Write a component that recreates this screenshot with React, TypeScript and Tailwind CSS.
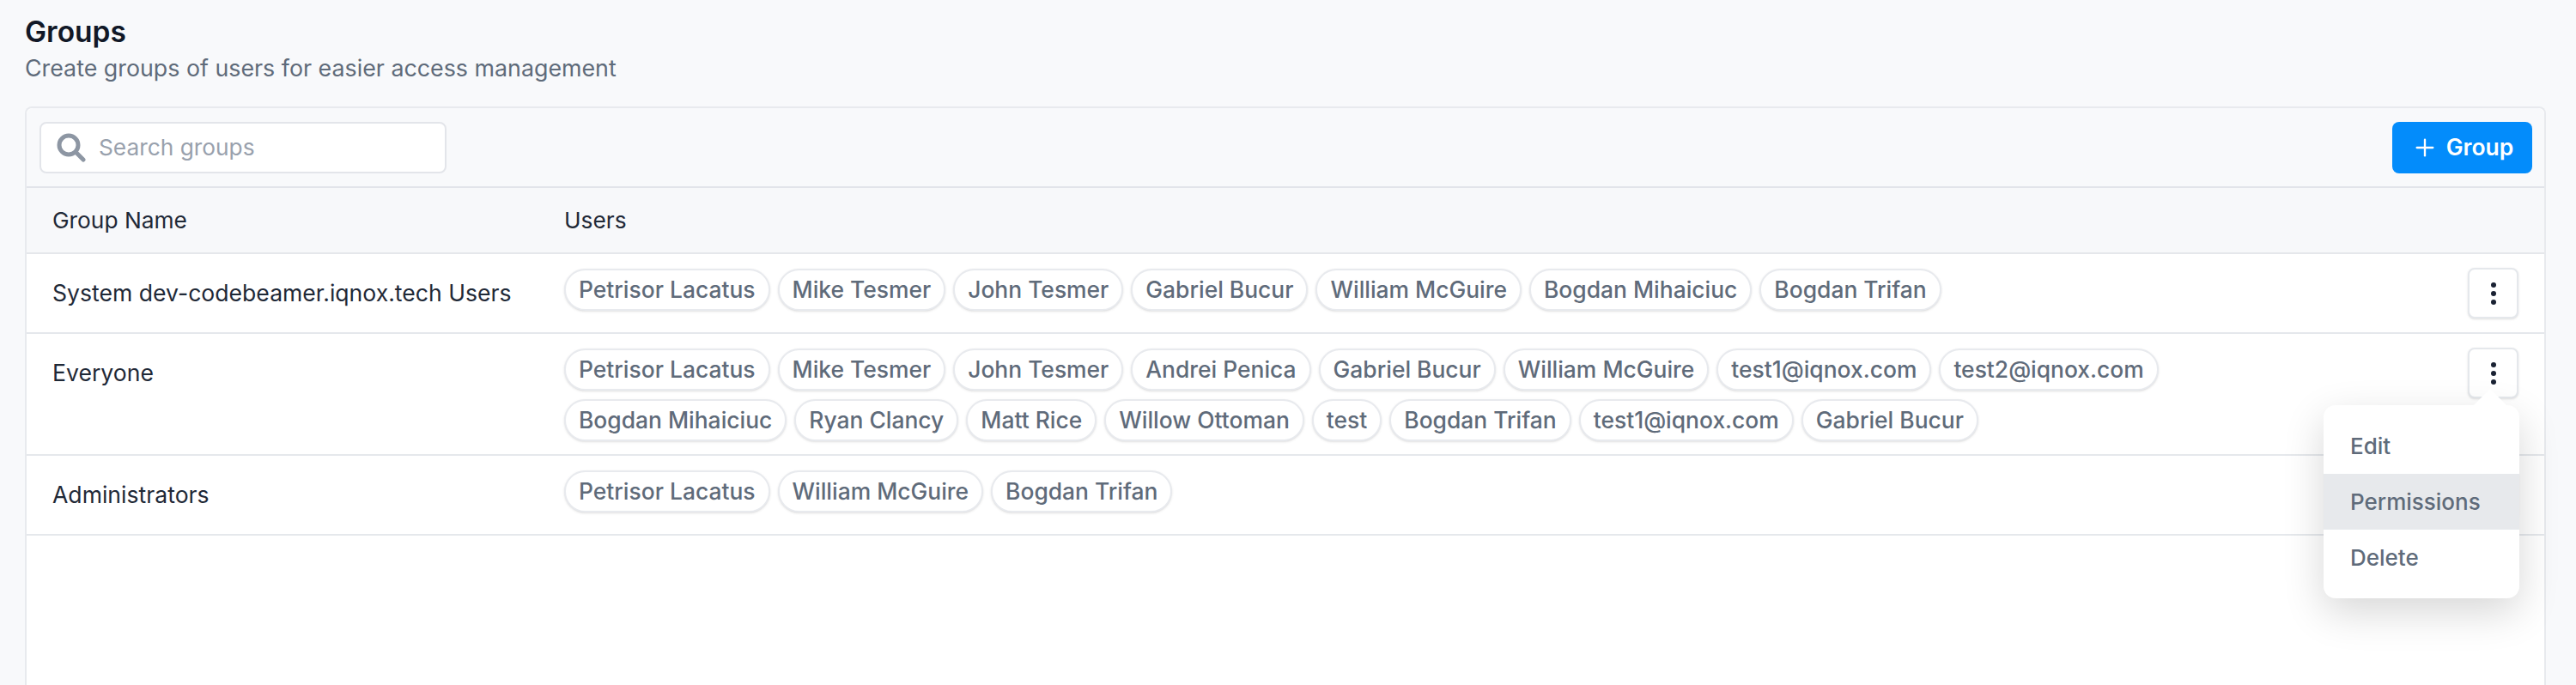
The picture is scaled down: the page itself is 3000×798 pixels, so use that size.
import { Plus } from "lucide-react";

const GROUPS = [
  {
    name: "System dev-codebeamer.iqnox.tech Users",
    users: ["Petrisor Lacatus", "Mike Tesmer", "John Tesmer", "Gabriel Bucur", "William McGuire", "Bogdan Mihaiciuc", "Bogdan Trifan"],
  },
  {
    name: "Everyone",
    users: [
      "Petrisor Lacatus", "Mike Tesmer", "John Tesmer", "Andrei Penica", "Gabriel Bucur", "William McGuire", "test1@iqnox.com", "test2@iqnox.com",
      "Bogdan Mihaiciuc", "Ryan Clancy", "Matt Rice", "Willow Ottoman", "test", "Bogdan Trifan", "test1@iqnox.com", "Gabriel Bucur",
    ],
    open: true,
  },
  {
    name: "Administrators",
    users: ["Petrisor Lacatus", "William McGuire", "Bogdan Trifan"],
  },
];

function Kebab() {
  return (
    <button className="flex h-[59px] w-[59px] shrink-0 items-center justify-center rounded-[8px] border-2 border-[#e5e8ec] bg-white shadow-sm">
      <span className="flex flex-col gap-[4px]">
        <span className="h-[6px] w-[6px] rounded-full bg-[#1a2233]" />
        <span className="h-[6px] w-[6px] rounded-full bg-[#1a2233]" />
        <span className="h-[6px] w-[6px] rounded-full bg-[#1a2233]" />
      </span>
    </button>
  );
}

function RowMenu() {
  return (
    <div className="absolute right-[-1px] top-[67px] z-10 w-[228px] rounded-[14px] bg-white py-[15px] text-[26px] font-medium text-[#5f6b7a] shadow-[0_16px_48px_rgba(0,0,0,0.16)]">
      <div className="absolute right-[19px] top-[-13px] h-[30px] w-[30px] rotate-45 rounded-[3px] bg-white" />
      <div className="relative flex h-[65px] items-center px-[31px]">Edit</div>
      <div className="relative flex h-[65px] items-center bg-[#e7e9ec] px-[31px]">Permissions</div>
      <div className="relative flex h-[65px] items-center px-[31px]">Delete</div>
    </div>
  );
}

export default function App() {
  return (
    <div className="flex h-[798px] flex-col overflow-hidden bg-[#f8f9fb] pl-[29px] pr-[35px] pt-[17px] font-['Inter',sans-serif] text-[#111827]">
      <h1 className="text-[33.5px] font-semibold leading-[40px]">Groups</h1>
      <p className="mt-[3px] text-[26.8px] leading-[38px] text-[#5f6b7a]">Create groups of users for easier access management</p>

      <div className="mt-[26px] flex flex-1 flex-col rounded-t-[8px] border-2 border-b-0 border-[#e8eaee] bg-white">
        <div className="flex h-[93px] items-center justify-between rounded-t-[8px] border-b-2 border-[#e2e4ea] bg-[#f8f9fb] pl-[15px] pr-[14px]">
          <div className="flex h-[60px] w-[474px] items-center gap-[15px] rounded-[8px] border-2 border-[#e3e5ea] bg-white pl-[18px]">
            <svg width="34" height="34" viewBox="0 0 34 34" fill="none" stroke="#8d96a3" strokeWidth="5" strokeLinecap="round">
              <circle cx="14" cy="14" r="11" />
              <path d="M22.5 22.5 L31 31" />
            </svg>
            <span className="text-[26.3px] text-[#99a1ad]">Search groups</span>
          </div>
          <button className="flex h-[60px] w-[163px] items-center justify-center gap-[9px] rounded-[8px] bg-[#038cfb] text-[26.5px] font-semibold text-white">
            <Plus size={32} strokeWidth={1.75} />
            Group
          </button>
        </div>

        <div className="flex h-[77px] items-center border-b-2 border-[#e5e7eb] bg-[#f7f8fa] pl-[30px] text-[26.3px] text-[#1f2937]">
          <div className="w-[596px] shrink-0">Group Name</div>
          <div>Users</div>
        </div>

        {GROUPS.map((group) => (
          <div key={group.name} className="flex items-start border-b-2 border-[#e5e8ec] py-[16px] pl-[30px] pr-[30px]">
            <div className="flex h-[59px] w-[596px] shrink-0 items-center text-[26.6px] text-[#1f2937]">{group.name}</div>
            <div className="mb-[-1px] mt-[1px] flex flex-1 flex-wrap gap-x-[9px] gap-y-[10px] pr-[280px]">
              {group.users.map((user, i) => (
                <span key={i} className="flex h-[49px] items-center rounded-full border-2 border-[#e8eaee] bg-white px-[15px] text-[26.43px] font-medium text-[#5f6b7a] shadow-sm">
                  {user}
                </span>
              ))}
            </div>
            <div className="relative">
              <Kebab />
              {group.open && <RowMenu />}
            </div>
          </div>
        ))}
      </div>
    </div>
  );
}
